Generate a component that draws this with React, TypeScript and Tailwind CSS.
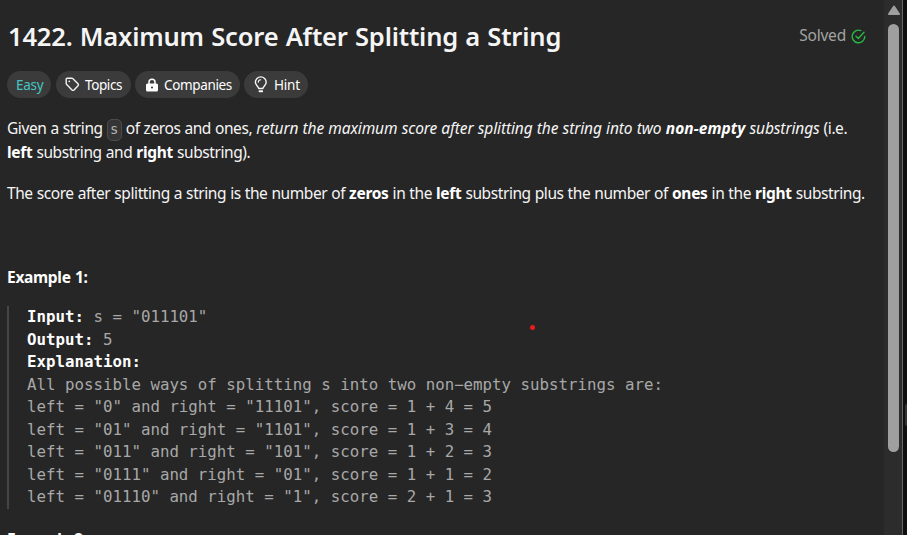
import type { ReactNode } from "react";

function Pill({ children, className }: { children: ReactNode; className: string }) {
  return (
    <div className={`flex h-[27px] shrink-0 items-center rounded-full bg-[#3b3b3b] text-[14px] text-white ${className}`}>
      {children}
    </div>
  );
}

function B({ children }: { children: ReactNode }) {
  return <b className="font-bold tracking-[-0.3px] text-white">{children}</b>;
}

function TagIcon() {
  return (
    <svg width="15" height="15" viewBox="0 0 15 15" fill="none" stroke="#f2f2f2" strokeWidth="1.4" strokeLinejoin="round">
      <path d="M1.2 2.2a1 1 0 0 1 1-1h4.5c.4 0 .7.1 1 .4l5.3 5.2c.6.6.6 1.3 0 1.9l-4 4.2c-.6.6-1.4.6-2 0L1.7 7.5c-.3-.3-.5-.7-.5-1.1z" />
      <circle cx="4.3" cy="4.3" r="0.9" fill="#f2f2f2" stroke="none" />
    </svg>
  );
}

function LockIcon() {
  return (
    <svg width="14" height="14" viewBox="0 0 14 14" fill="none">
      <path d="M4 6V4.2a3 3 0 0 1 6 0V6" stroke="white" strokeWidth="1.5" />
      <rect x="1" y="5.5" width="12" height="8" rx="1.5" fill="white" />
      <circle cx="7" cy="9.5" r="1.1" fill="#3b3b3b" />
    </svg>
  );
}

function BulbIcon() {
  return (
    <svg width="14" height="17" viewBox="0 0 14 17" fill="none" stroke="#f5f5f5" strokeWidth="1.4" strokeLinecap="round">
      <path d="M4.7 12.5c0-2-3.300-3-3.300-6.200a5.300 5.300 0 0 1 10.800 0c0 3.200-3.300 4.200-3.300 6.200z" strokeLinejoin="round" />
      <path d="M4.3 6.2a2.600 2.600 0 0 1 2.400-2.500" strokeWidth="1.1" />
      <path d="M5.5 15.2h2.700" strokeWidth="1.9" />
    </svg>
  );
}

function SolvedIcon() {
  return (
    <svg width="15" height="15" viewBox="0 0 15 15" fill="none" stroke="#28b846" strokeWidth="1.4" strokeLinecap="round" strokeLinejoin="round">
      <path d="M9.8 1.6A6.300 6.300 0 1 0 13.800 7.500" />
      <path d="M5 7.2l2.300 2.200 5.700-6.100" />
    </svg>
  );
}

const lines = [
  "All possible ways of splitting s into two non−empty substrings are:",
  'left = "0" and right = "11101", score = 1 + 4 = 5',
  'left = "01" and right = "1101", score = 1 + 3 = 4',
  'left = "011" and right = "101", score = 1 + 2 = 3',
  'left = "0111" and right = "01", score = 1 + 1 = 2',
  'left = "01110" and right = "1", score = 2 + 1 = 3',
];

export default function App() {
  return (
    <div className="relative flex h-[535px] w-[907px] overflow-hidden bg-[#262626] font-['Noto_Sans','Open_Sans',sans-serif] text-[#f5f5f5]">
      <main className="flex h-[535px] w-[884px] shrink-0 flex-col overflow-hidden pl-[7px]">
        <header className="mt-[19px] flex h-[34px] shrink-0 items-center justify-between pr-[18px]">
          <h1 className="pl-px text-[25.5px] leading-[34px] font-semibold tracking-[-0.17px] whitespace-nowrap [word-spacing:0.8px]">
            1422. Maximum Score After Splitting a String
          </h1>
          <div className="flex items-center gap-[5px] text-[15.5px] tracking-[-0.2px] text-[#a3a3a3]">
            <span>Solved</span>
            <SolvedIcon />
          </div>
        </header>

        <div className="mt-[18px] flex shrink-0 tracking-[-0.4px]">
          <Pill className="mr-[5px] w-[44px] pl-[9px]">
            <span className="pt-[2px] text-[13.5px] tracking-[-0.3px] text-[#46c6c2]">Easy</span>
          </Pill>
          <Pill className="mr-[4px] w-[75px] gap-[5px] pl-[9px]">
            <TagIcon />
            <span className="pt-[2px] text-[13.5px] tracking-[-0.4px]">Topics</span>
          </Pill>
          <Pill className="mr-[4px] w-[105px] gap-[5px] pl-[10px]">
            <LockIcon />
            <span className="pt-[2px] text-[13.5px] tracking-[-0.35px]">Companies</span>
          </Pill>
          <Pill className="w-[64px] gap-[6px] pl-[10px]">
            <BulbIcon />
            <span className="pt-[2px] text-[13.5px] tracking-[-0.2px]">Hint</span>
          </Pill>
        </div>

        <p className="mt-[18px] shrink-0 text-[15.5px] leading-[24px] tracking-[-0.42px] whitespace-nowrap [word-spacing:0.4px]">
          Given a string{" "}
          <code className="-my-[3px] inline-block h-[22px] w-[15px] rounded-[5px] border border-[#4b4b4b] bg-[#353535] text-center align-middle font-['DejaVu_Sans_Mono',monospace] text-[14px] leading-[19px] tracking-normal text-[#b3b3b3]">
            s
          </code>{" "}
          of zeros and ones,{" "}
          <em className="tracking-[-0.13px]">
            return the maximum score after splitting the string into two{" "}
            <b className="font-bold text-white tracking-[0.05px]">non-empty</b> substrings
          </em>{" "}
          (i.e.
          <br />
          <B>left</B> substring and <B>right</B> substring).
        </p>
        <p className="mt-[17px] shrink-0 text-[15.5px] leading-[24px] tracking-[-0.42px] whitespace-nowrap [word-spacing:0.4px]">
          The score after splitting a string is the number of <B>zeros</B> in the <B>left</B> substring plus the number
          of <B>ones</B> in the <B>right</B> substring.
        </p>
        <p className="mt-[60px] shrink-0 text-[15.5px] leading-[24px] [word-spacing:0.6px]">
          <B>Example 1:</B>
        </p>

        <pre className="mt-[17px] h-[203px] shrink-0 border-l-2 border-[#454545] pl-[18px] font-['DejaVu_Sans_Mono',monospace] text-[15.77px] leading-[22.5px] text-[#a8a8a8]">
          <div>
            <b className="text-white">Input:</b>
            {' s = "011101"'}
          </div>
          <div>
            <b className="text-white">Output:</b>
            {" 5"}
          </div>
          <div>
            <b className="text-white">Explanation:</b>
          </div>
          {lines.map((line) => (
            <div key={line}>{line}</div>
          ))}
        </pre>
        <p className="mt-[18px] shrink-0 text-[15.5px] leading-[24px]">
          <B>Example 2:</B>
        </p>
      </main>

      <aside className="flex w-[18px] shrink-0 flex-col bg-[#2c2c2c] pl-[4px]">
        <svg className="mt-[5px] shrink-0" width="12" height="10" viewBox="0 0 12 10">
          <path d="M6 1.5L11 9H1z" fill="#9f9f9f" stroke="#9f9f9f" strokeWidth="2" strokeLinejoin="round" />
        </svg>
        <div className="mt-[9px] h-[428px] w-[11px] rounded-full bg-[#9f9f9f]" />
      </aside>
      <div className="w-px shrink-0 bg-[#666666]" />
      <div className="flex flex-1 flex-col items-end bg-[#0e0f0f] pt-[404px]">
        <div className="h-[22px] w-[2px] rounded-l bg-[#333333]" />
      </div>
      <div className="absolute top-[324.5px] left-[529.5px] size-[5px] rounded-full bg-[#e81c1c]" />
    </div>
  );
}
